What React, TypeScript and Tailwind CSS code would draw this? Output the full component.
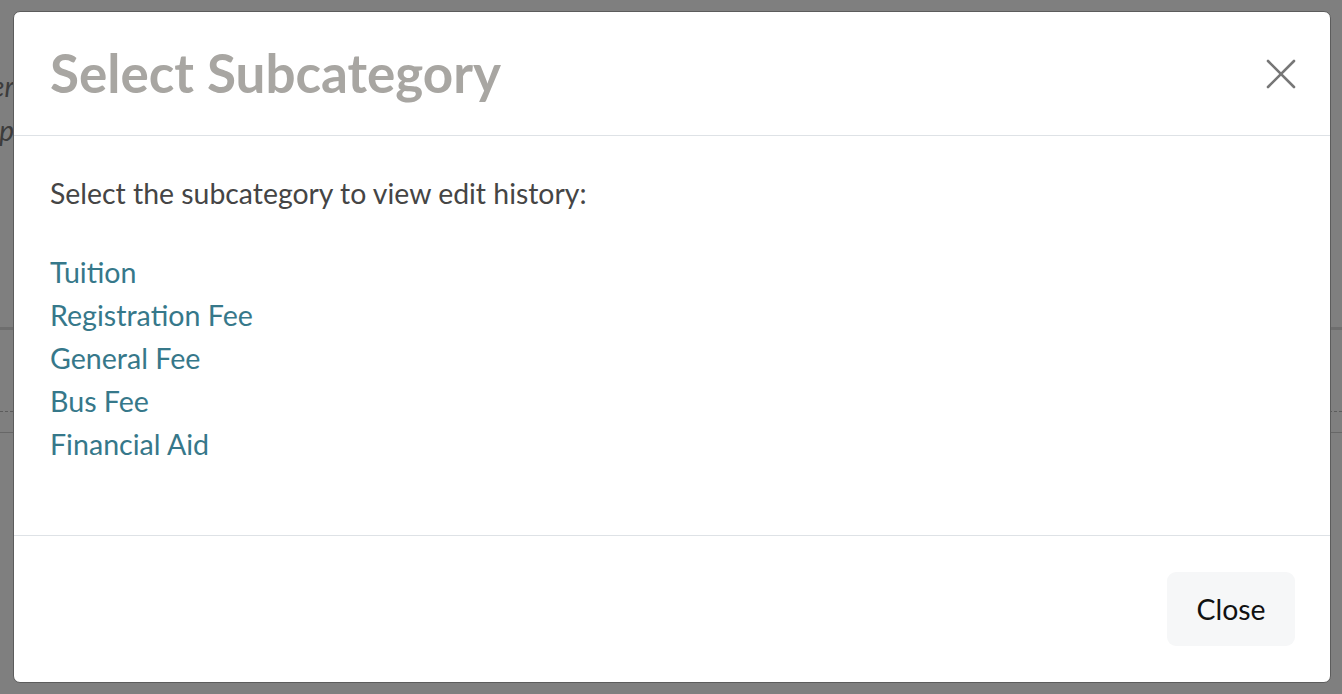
import React from "react";

export default function App() {
  const links = ["Tuition", "Registration Fee", "General Fee", "Bus Fee", "Financial Aid"];
  return (
    <div className="relative w-[1342px] h-[694px] overflow-hidden bg-white font-['Lato','Liberation_Sans',sans-serif]">
      {/* page behind */}
      <div className="flex flex-col h-full">
        <div className="h-[64px]" />
        <div className="w-[14px] flex flex-col items-end italic text-[28px] leading-[44px] text-[#787878] whitespace-nowrap">
          <div>ner</div>
          <div>up</div>
        </div>
        <div className="h-[175px]" />
        <div className="h-[3px] bg-[#dcdcdc]" />
        <div className="h-[81px]" />
        <div className="border-t border-dashed border-[#b8b8b8]" />
        <div className="h-[20px]" />
        <div className="border-t border-[#cfcfcf]" />
      </div>

      {/* backdrop */}
      <div className="absolute inset-0 bg-black/50 flex items-start justify-start pl-[13px] pt-[11px]">
        <div className="w-[1318px] h-[672px] bg-white rounded-[7px] border border-[#5c5c5c] flex flex-col overflow-hidden">
          <div className="h-[124px] flex items-center justify-between pl-[36px] pr-[33px] border-b border-[#dee2e6]">
            <h1 className="text-[53px] font-bold text-[#a8a6a2] leading-none -mt-[3px]">Select Subcategory</h1>
            <button className="w-[32px] h-[32px] flex items-center justify-center">
              <svg width="30" height="30" viewBox="0 0 30 30" fill="none" stroke="#777" strokeWidth="2.6" strokeLinecap="round">
                <line x1="2" y1="2" x2="28" y2="28" />
                <line x1="28" y1="2" x2="2" y2="28" />
              </svg>
            </button>
          </div>
          <div className="h-[400px] pl-[36px] pt-[37px] border-b border-[#dee2e6]">
            <p className="text-[28.4px] leading-[40px] text-[#454545]">Select the subcategory to view edit history:</p>
            <ul className="mt-[38px] flex flex-col">
              {links.map((l) => (
                <li key={l} className="text-[28.6px] leading-[43px] text-[#36788a]">
                  <a>{l}</a>
                </li>
              ))}
            </ul>
          </div>
          <div className="flex-1 flex items-center justify-end pr-[35px]">
            <button className="w-[128px] h-[74px] rounded-[9px] bg-[#f6f7f8] text-[28.4px] text-[#111] flex items-center justify-center">
              Close
            </button>
          </div>
        </div>
      </div>
    </div>
  );
}
